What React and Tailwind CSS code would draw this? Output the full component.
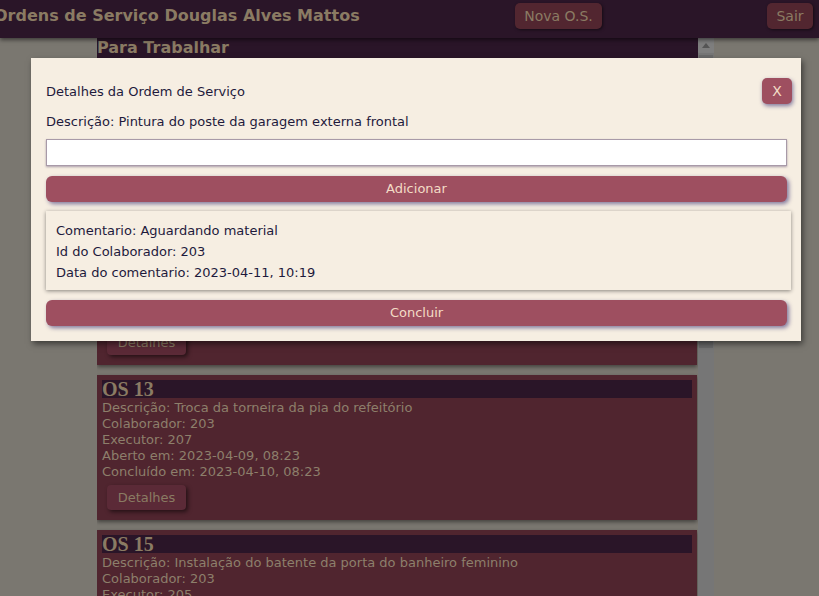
import React from "react";

const sans = { fontFamily: '"DejaVu Sans", Verdana, sans-serif' };

function DetalhesBtn() {
  return (
    <button className="mt-[5px] ml-[5px] h-[25px] w-[79px] rounded-[4px] bg-[#5b2a37] text-[13px] text-[#8a7b63] shadow-[2px_2px_4px_rgba(0,0,0,0.55)]">
      Detalhes
    </button>
  );
}

function Card({ title, lines }) {
  return (
    <div className="bg-[#50252f] px-[5px] pt-[5px] pb-[10px] shadow-[0_2px_4px_rgba(0,0,0,0.45)]">
      <div
        className="bg-[#2a1528] h-[18px] flex items-center text-[20px] font-bold leading-none text-[#8a7b63]"
        style={{ fontFamily: '"Liberation Serif", "Times New Roman", serif' }}
      >
        {title}
      </div>
      <div className="mt-[2px] text-[13px] leading-[16px] text-[#8d7f6b]">
        {lines.map((l, i) => (
          <div key={i}>{l}</div>
        ))}
      </div>
      <DetalhesBtn />
    </div>
  );
}

export default function App() {
  return (
    <div className="relative w-[819px] h-[596px] overflow-hidden bg-[#7a7770]" style={sans}>
      <header className="relative z-10 h-[38px] bg-[#2a1528] flex items-start shadow-[0_2px_4px_rgba(0,0,0,0.5)]">
        <div className="ml-[-6px] mt-[6px] text-[16px] font-bold text-[#8a7b63] whitespace-nowrap leading-[20px]">
          Ordens de Serviço Douglas Alves Mattos
        </div>
        <button className="absolute left-[515px] top-[3px] h-[26px] w-[87px] rounded-[5px] bg-[#522630] text-[14px] text-[#8a7b63] shadow-[1px_1px_3px_rgba(0,0,0,0.5)]">
          Nova O.S.
        </button>
        <button className="absolute left-[767px] top-[3px] h-[26px] w-[46px] rounded-[5px] bg-[#522630] text-[14px] text-[#8a7b63] shadow-[1px_1px_3px_rgba(0,0,0,0.5)]">
          Sair
        </button>
      </header>

      <div className="flex">
        <div className="w-[97px] shrink-0" />
        <div className="flex h-[558px] w-[617px] overflow-hidden">
          <div className="w-[601px] shrink-0">
            <div className="h-[20px] bg-[#2a1528] text-[16px] font-bold leading-[20px] text-[#8a7b63]">
              Para Trabalhar
            </div>
            <div className="flex flex-col gap-[10px] pr-[1px] pt-[4px]">
              <div className="h-[303px] bg-[#50252f] px-[5px] pb-[10px] flex flex-col justify-end shadow-[0_2px_4px_rgba(0,0,0,0.45)]">
                <DetalhesBtn />
              </div>
              <Card
                title="OS 13"
                lines={[
                  "Descrição: Troca da torneira da pia do refeitório",
                  "Colaborador: 203",
                  "Executor: 207",
                  "Aberto em: 2023-04-09, 08:23",
                  "Concluído em: 2023-04-10, 08:23",
                ]}
              />
              <Card
                title="OS 15"
                lines={[
                  "Descrição: Instalação do batente da porta do banheiro feminino",
                  "Colaborador: 203",
                  "Executor: 205",
                  "Aberto em: 2023-04-09, 08:23",
                  "Concluído em: 2023-04-10, 08:23",
                ]}
              />
            </div>
          </div>
          <div className="w-[16px] shrink-0 bg-[#767676] flex flex-col">
            <div className="h-[15px] bg-[#7e7e7e] flex items-center justify-center">
              <svg width="8" height="5" viewBox="0 0 8 5">
                <path d="M0 5 L4 0 L8 5 Z" fill="#555" />
              </svg>
            </div>
            <div className="mt-[2px] mx-[1px] h-[293px] bg-[#6a6a6a]" />
          </div>
        </div>
      </div>

      {/* Modal */}
      <div className="absolute left-[31px] top-[58px] z-20 w-[770px] h-[283px] bg-[#f6eee2] shadow-[2px_3px_6px_rgba(0,0,0,0.5)] pl-[15px] pr-[14px] text-[13px] text-[#1e1a3c]">
        <div className="flex items-center justify-between pt-[20px] h-[46px]">
          <div className="mt-[2px]">Detalhes da Ordem de Serviço</div>
          <button className="mr-[-5px] h-[26px] w-[30px] rounded-[5px] bg-[#9e4f60] text-[14px] text-[#f3dcc6] shadow-[1px_2px_4px_rgba(50,40,110,0.6)]">
            X
          </button>
        </div>
        <div className="mt-[9px] leading-[18px]">Descrição: Pintura do poste da garagem externa frontal</div>
        <input className="mt-[8px] block h-[27px] w-[741px] bg-white border border-[#a89aa8] shadow-[0_1px_2px_rgba(60,40,90,0.4)] outline-none" />
        <button className="mt-[10px] block h-[26px] w-[741px] rounded-[6px] bg-[#9e4f60] text-[13px] text-[#f3dcc6] shadow-[2px_2px_4px_rgba(50,40,110,0.6)]">
          Adicionar
        </button>
        <div className="mt-[9px] h-[79px] w-[745px] bg-[#f6eee2] pl-[10px] pt-[9px] leading-[21px] shadow-[0_1px_4px_rgba(0,0,0,0.45)]">
          <div>Comentario: Aguardando material</div>
          <div>Id do Colaborador: 203</div>
          <div>Data do comentario: 2023-04-11, 10:19</div>
        </div>
        <button className="mt-[10px] block h-[26px] w-[741px] rounded-[6px] bg-[#9e4f60] text-[13px] text-[#f3dcc6] shadow-[2px_2px_4px_rgba(50,40,110,0.6)]">
          Concluir
        </button>
      </div>
    </div>
  );
}
